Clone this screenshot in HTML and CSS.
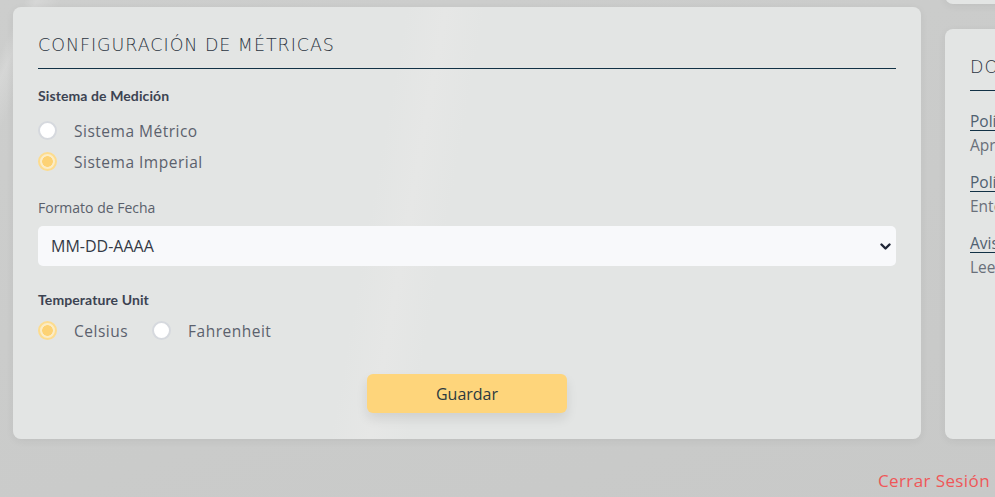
FILE: index.html
```html
<!DOCTYPE html>
<html lang="es">
<head>
<meta charset="utf-8">
<title>Configuración de métricas</title>
<link rel="stylesheet" href="styles.css">
</head>
<body>
<div class="page">
  <div class="row">
    <section class="card main">
      <h2 class="card-title">Configuración de métricas</h2>
      <div class="group">
        <div class="group-label">Sistema de Medición</div>
        <label class="radio"><input type="radio" name="sys"><span>Sistema Métrico</span></label>
        <label class="radio"><input type="radio" name="sys" checked><span>Sistema Imperial</span></label>
      </div>
      <div class="field">
        <div class="field-label">Formato de Fecha</div>
        <div class="select">
          <span>MM-DD-AAAA</span>
          <svg class="chev" width="11" height="8" viewBox="0 0 11 8"><path d="M1.5 1.5 L5.5 5.5 L9.5 1.5" fill="none" stroke="#1f2636" stroke-width="2.4" stroke-linecap="round" stroke-linejoin="round"/></svg>
        </div>
      </div>
      <div class="group temp">
        <div class="group-label">Temperature Unit</div>
        <div class="inline">
          <label class="radio"><input type="radio" name="temp" checked><span>Celsius</span></label>
          <label class="radio"><input type="radio" name="temp"><span>Fahrenheit</span></label>
        </div>
      </div>
      <div class="actions"><button class="btn">Guardar</button></div>
    </section>
    <aside class="side">
      <div class="card mini"></div>
      <div class="card docs">
        <h2 class="card-title docs-title">Documentos legales</h2>
        <div class="doc"><a href="#">Política de Privacidad</a><p>Aprende cómo protegemos tus datos</p></div>
        <div class="doc"><a href="#">Política de Cookies</a><p>Entérate de cómo usamos las cookies</p></div>
        <div class="doc"><a href="#">Aviso Legal</a><p>Lee nuestras condiciones de uso</p></div>
      </div>
    </aside>
  </div>
  <div class="footer"><a class="logout" href="#">Cerrar Sesión</a></div>
</div>
</body>
</html>
```
FILE: styles.css
```css
* { box-sizing: border-box; }
html, body { margin: 0; height: 100%; overflow: hidden; }
body {
  background: #cacbca;
  background-image:
    linear-gradient(115deg, transparent 0 2%, rgba(255,255,255,0.18) 3%, transparent 5%),
    linear-gradient(160deg, #cdcecd, #c8c9c8);
  font-family: "Open Sans", "Liberation Sans", sans-serif;
  color: #3a4150;
}
.page { padding: 7px 0 0 13px; }
.row { display: flex; gap: 24px; align-items: flex-start; }
.card {
  background: #e3e5e4;
  border-radius: 8px;
  box-shadow: 0 2px 8px rgba(0,0,0,0.06);
}
.main {
  width: 908px;
  height: 432px;
  padding: 27px 25px 0 25px;
  flex: none;
  background: linear-gradient(100deg, #e3e5e4 0 40%, #e6e7e6 44%, #e3e5e4 48%);
}
.card-title {
  margin: 0;
  font-family: "DejaVu Sans", sans-serif;
  font-weight: 300;
  font-size: 17.5px;
  letter-spacing: 0.95px;
  text-transform: uppercase;
  color: #2b3441;
  padding-bottom: 12px;
  border-bottom: 1.5px solid #123246;
  line-height: 22px;
}
.group { margin-top: 18px; }
.group-label {
  font-family: "Lato", sans-serif;
  font-weight: 700;
  font-size: 14px;
  letter-spacing: 0.1px;
  color: #3c4352;
  line-height: 18px;
  margin-bottom: 10px;
}
.radio {
  display: flex;
  align-items: center;
  height: 31px;
  font-size: 15.5px;
  color: #5b616d;
  cursor: pointer;
}
.radio input {
  appearance: none;
  -webkit-appearance: none;
  margin: 0 17px 0 0;
  width: 19px;
  height: 19px;
  border-radius: 50%;
  background: #fff;
  border: 2px solid #d6d9de;
  flex: none;
}
.radio input:checked {
  border-color: #fddc8e;
  background: radial-gradient(circle, #fdd274 0 5px, #fbecc6 5.6px);
}
.radio span { letter-spacing: 0.5px; }
.field { margin-top: 21px; }
.field-label {
  font-size: 14px;
  color: #5a606b;
  line-height: 20px;
  margin-bottom: 8px;
}
.select {
  height: 40px;
  background: #f8f9fb;
  border-radius: 5px;
  display: flex;
  align-items: center;
  justify-content: space-between;
  padding: 0 5px 0 13px;
  font-size: 16px;
  color: #343a46;
}
.chev { margin-top: 1px; }
.temp { margin-top: 25px; }
.temp .group-label { margin-bottom: 6px; }
.inline { display: flex; gap: 24px; }
.actions { display: flex; justify-content: center; margin-top: 28px; }
.btn {
  width: 200px;
  height: 39px;
  border: none;
  border-radius: 6px;
  background: #fed57b;
  color: #2c3a40;
  font-family: "Open Sans", sans-serif;
  font-size: 16px;
  box-shadow: 0 6px 12px rgba(0,0,0,0.09);
}
.side {
  display: flex;
  flex-direction: column;
  gap: 25px;
  width: 300px;
  flex: none;
  margin-top: -36px;
}
.mini { height: 33px; }
.docs { height: 410px; padding: 27px 25px; overflow: hidden; }
.docs-title { padding-bottom: 12px; }
.doc { margin-top: 16px; white-space: nowrap; }
.doc:first-of-type { margin-top: 19px; }
.doc a {
  color: #4f6070;
  font-size: 15.5px;
  text-decoration: underline;
  text-decoration-color: #123246;
  text-underline-offset: 3px;
  line-height: 20px;
}
.doc p { margin: 3px 0 0; font-size: 15.5px; color: #6a707a; line-height: 20px; }
.footer { display: flex; justify-content: flex-end; padding: 30px 5px 0 0; }
.logout {
  color: #ef5758;
  font-size: 17px;
  text-decoration: none;
  letter-spacing: 0.4px;
}
```
